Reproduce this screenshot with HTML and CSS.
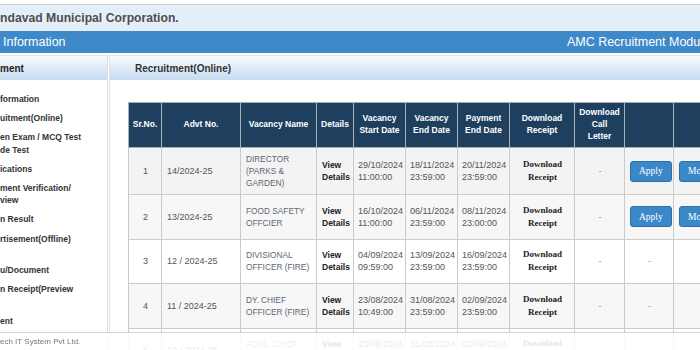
FILE: index.html
```html
<!DOCTYPE html>
<html lang="en">
<head>
  <meta charset="UTF-8" />
  <meta name="viewport" content="width=device-width, initial-scale=1.0"/>
  <title>AMC Recruitment Module</title>
  <link rel="stylesheet" href="styles.css">
</head>
<body>

<div class="page">
  <div class="top-header">
    <span class="corp-name">ndavad Municipal Corporation.</span>
  </div>

  <div class="title-bar">
    <span>Information</span>
    <span>AMC Recruitment Module</span>
  </div>

  <div class="content">
    <div class="sidebar">
      <div class="panel-head">ment</div>
      <ul class="menu">
        <li>formation</li>
        <li>uitment(Online)</li>
        <li>en Exam / MCQ Test<br>de Test</li>
        <li>ications</li>
        <li>ment Verification/<br>view</li>
        <li>n Result</li>
        <li>rtisement(Offline)<br>&nbsp;</li>
        <li>u/Document</li>
        <li>n Receipt(Preview<br>&nbsp;</li>
        <li>ent</li>
      </ul>
    </div>

    <div class="main">
      <div class="panel-head main-head">Recruitment(Online)</div>
      <div class="table-wrap">
        <table class="vacancy-table">
          <colgroup>
            <col style="width:33px"><col style="width:79px"><col style="width:76px"><col style="width:37px">
            <col style="width:52px"><col style="width:52px"><col style="width:52px"><col style="width:65px">
            <col style="width:50px"><col style="width:49px"><col style="width:55px">
          </colgroup>
          <thead>
            <tr>
              <th>Sr.No.</th>
              <th>Advt No.</th>
              <th>Vacancy Name</th>
              <th>Details</th>
              <th>Vacancy<br>Start Date</th>
              <th>Vacancy<br>End Date</th>
              <th>Payment<br>End Date</th>
              <th>Download<br>Receipt</th>
              <th>Download<br>Call<br>Letter</th>
              <th></th>
              <th></th>
            </tr>
          </thead>
          <tbody>
            <tr class="row-hover">
              <td class="center">1</td>
              <td>14/2024-25</td>
              <td class="name">DIRECTOR (PARKS &amp; GARDEN)</td>
              <td class="details">View Details</td>
              <td class="date">29/10/2024<br>11:00:00</td>
              <td class="date">18/11/2024<br>23:59:00</td>
              <td class="date">20/11/2024<br>23:59:00</td>
              <td class="receipt">Download<br>Receipt</td>
              <td class="dash">-</td>
              <td class="center"><button class="btn">Apply</button></td>
              <td class="center"><button class="btn">Modify</button></td>
            </tr>
            <tr class="row-alt">
              <td class="center">2</td>
              <td>13/2024-25</td>
              <td class="name">FOOD SAFETY OFFCIER</td>
              <td class="details">View Details</td>
              <td class="date">16/10/2024<br>11:00:00</td>
              <td class="date">06/11/2024<br>23:59:00</td>
              <td class="date">08/11/2024<br>23:00:00</td>
              <td class="receipt">Download<br>Receipt</td>
              <td class="dash">-</td>
              <td class="center"><button class="btn">Apply</button></td>
              <td class="center"><button class="btn">Modify</button></td>
            </tr>
            <tr>
              <td class="center">3</td>
              <td>12 / 2024-25</td>
              <td class="name">DIVISIONAL OFFICER (FIRE)</td>
              <td class="details">View Details</td>
              <td class="date">04/09/2024<br>09:59:00</td>
              <td class="date">13/09/2024<br>23:59:00</td>
              <td class="date">16/09/2024<br>23:59:00</td>
              <td class="receipt">Download<br>Receipt</td>
              <td class="dash">-</td>
              <td class="dash">-</td>
              <td class="dash">-</td>
            </tr>
            <tr class="row-alt">
              <td class="center">4</td>
              <td>11 / 2024-25</td>
              <td class="name">DY. CHIEF OFFICER (FIRE)</td>
              <td class="details">View Details</td>
              <td class="date">23/08/2024<br>10:49:00</td>
              <td class="date">31/08/2024<br>23:59:00</td>
              <td class="date">02/09/2024<br>23:59:00</td>
              <td class="receipt">Download<br>Receipt</td>
              <td class="dash">-</td>
              <td class="dash">-</td>
              <td class="dash">-</td>
            </tr>
            <tr>
              <td class="center">5</td>
              <td>10 / 2024-25</td>
              <td class="name">ADDL. CHIEF OFFICER (FIRE)</td>
              <td class="details">View Details</td>
              <td class="date">23/08/2024<br>10:49:00</td>
              <td class="date">31/08/2024<br>23:59:00</td>
              <td class="date">02/09/2024<br>23:59:00</td>
              <td class="receipt">Download<br>Receipt</td>
              <td class="dash">-</td>
              <td class="dash">-</td>
              <td class="dash">-</td>
            </tr>
          </tbody>
        </table>
      </div>
    </div>
  </div>
</div>

<div class="footer">ech IT System Pvt Ltd.</div>

</body>
</html>
```

FILE: styles.css
```css
html, body {
  margin: 0;
  overflow: hidden;
}
body {
  font-family: "Liberation Sans", Arial, sans-serif;
  background: #fff;
}
.page {
  width: 760px;
  padding-top: 4px;
}

/* header */
.top-header {
  height: 26px;
  background: #e3eef9;
  border-top: 1px solid #cfcfcf;
  display: flex;
  align-items: center;
}
.corp-name {
  font-size: 12.2px;
  font-weight: bold;
  color: #4f4f4f;
}
.title-bar {
  height: 22px;
  background: #3e89c9;
  color: #fff;
  font-size: 12.5px;
  display: flex;
  align-items: center;
  justify-content: space-between;
  padding: 0 50px 0 3px;
}

/* layout */
.content {
  display: flex;
  gap: 1px;
  margin-top: 2px;
}
.sidebar {
  width: 107px;
  border-right: 1px solid #dcdcdc;
}
.main {
  flex: 1;
  border-left: 1px solid #e2e2e2;
}
.panel-head {
  height: 24px;
  border-top: 1px solid #dfe6ee;
  background: linear-gradient(#f8fbfe, #c5dbf0);
  font-size: 10px;
  font-weight: bold;
  color: #222;
  display: flex;
  align-items: center;
}
.main-head {
  padding-left: 25px;
  color: #333;
}

/* sidebar menu */
.menu {
  list-style: none;
  margin: 0;
  padding: 9.5px 0 0;
}
.menu li {
  font-size: 8.5px;
  font-weight: bold;
  color: #333;
  line-height: 12.7px;
  padding: 3.2px 0;
  white-space: nowrap;
}

/* table */
.table-wrap {
  padding: 22px 0 0 18px;
}
.vacancy-table {
  border-collapse: collapse;
  table-layout: fixed;
  width: 600px;
  font-size: 9px;
  color: #555;
}
.vacancy-table th {
  height: 44px;
  padding: 0 3px;
  background: #1f3f5f;
  border: 1px solid #a7b1bb;
  color: #fff;
  font-size: 8.5px;
  line-height: 11.7px;
  text-align: center;
}
.vacancy-table tbody tr {
  height: 44.5px;
}
.vacancy-table td {
  padding: 5px 4px 5px 5px;
  border: 1px solid #cbcbcb;
  line-height: 12px;
  vertical-align: middle;
}
.row-hover { background: #f3f3f3; }
.row-alt { background: #f7f7f7; }

.center { text-align: center; }
.name {
  font-size: 8.3px;
  color: #5d6874;
}
.details {
  font-weight: bold;
  font-size: 8.5px;
  color: #222;
}
.date {
  padding-left: 4px !important;
  padding-right: 1px !important;
  white-space: nowrap;
}
.receipt {
  font-family: "Liberation Serif", "Times New Roman", serif;
  font-weight: bold;
  color: #222;
  line-height: 13px !important;
  text-align: center;
}
.dash {
  text-align: center;
  color: #6b9bd1;
}
.btn {
  height: 21px;
  padding: 0 8px;
  background: #3b88c9;
  border: 1px solid #2f6fa7;
  border-radius: 3px;
  color: #fff;
  font-family: "Liberation Serif", "Times New Roman", serif;
  font-size: 9.5px;
  cursor: pointer;
}

/* footer */
.footer {
  position: fixed;
  left: 0;
  right: 0;
  bottom: 0;
  height: 17px;
  background: rgba(255, 255, 255, 0.88);
  border-top: 1px solid #d2d2d2;
  font-size: 8px;
  color: #777;
  display: flex;
  align-items: center;
}
```
